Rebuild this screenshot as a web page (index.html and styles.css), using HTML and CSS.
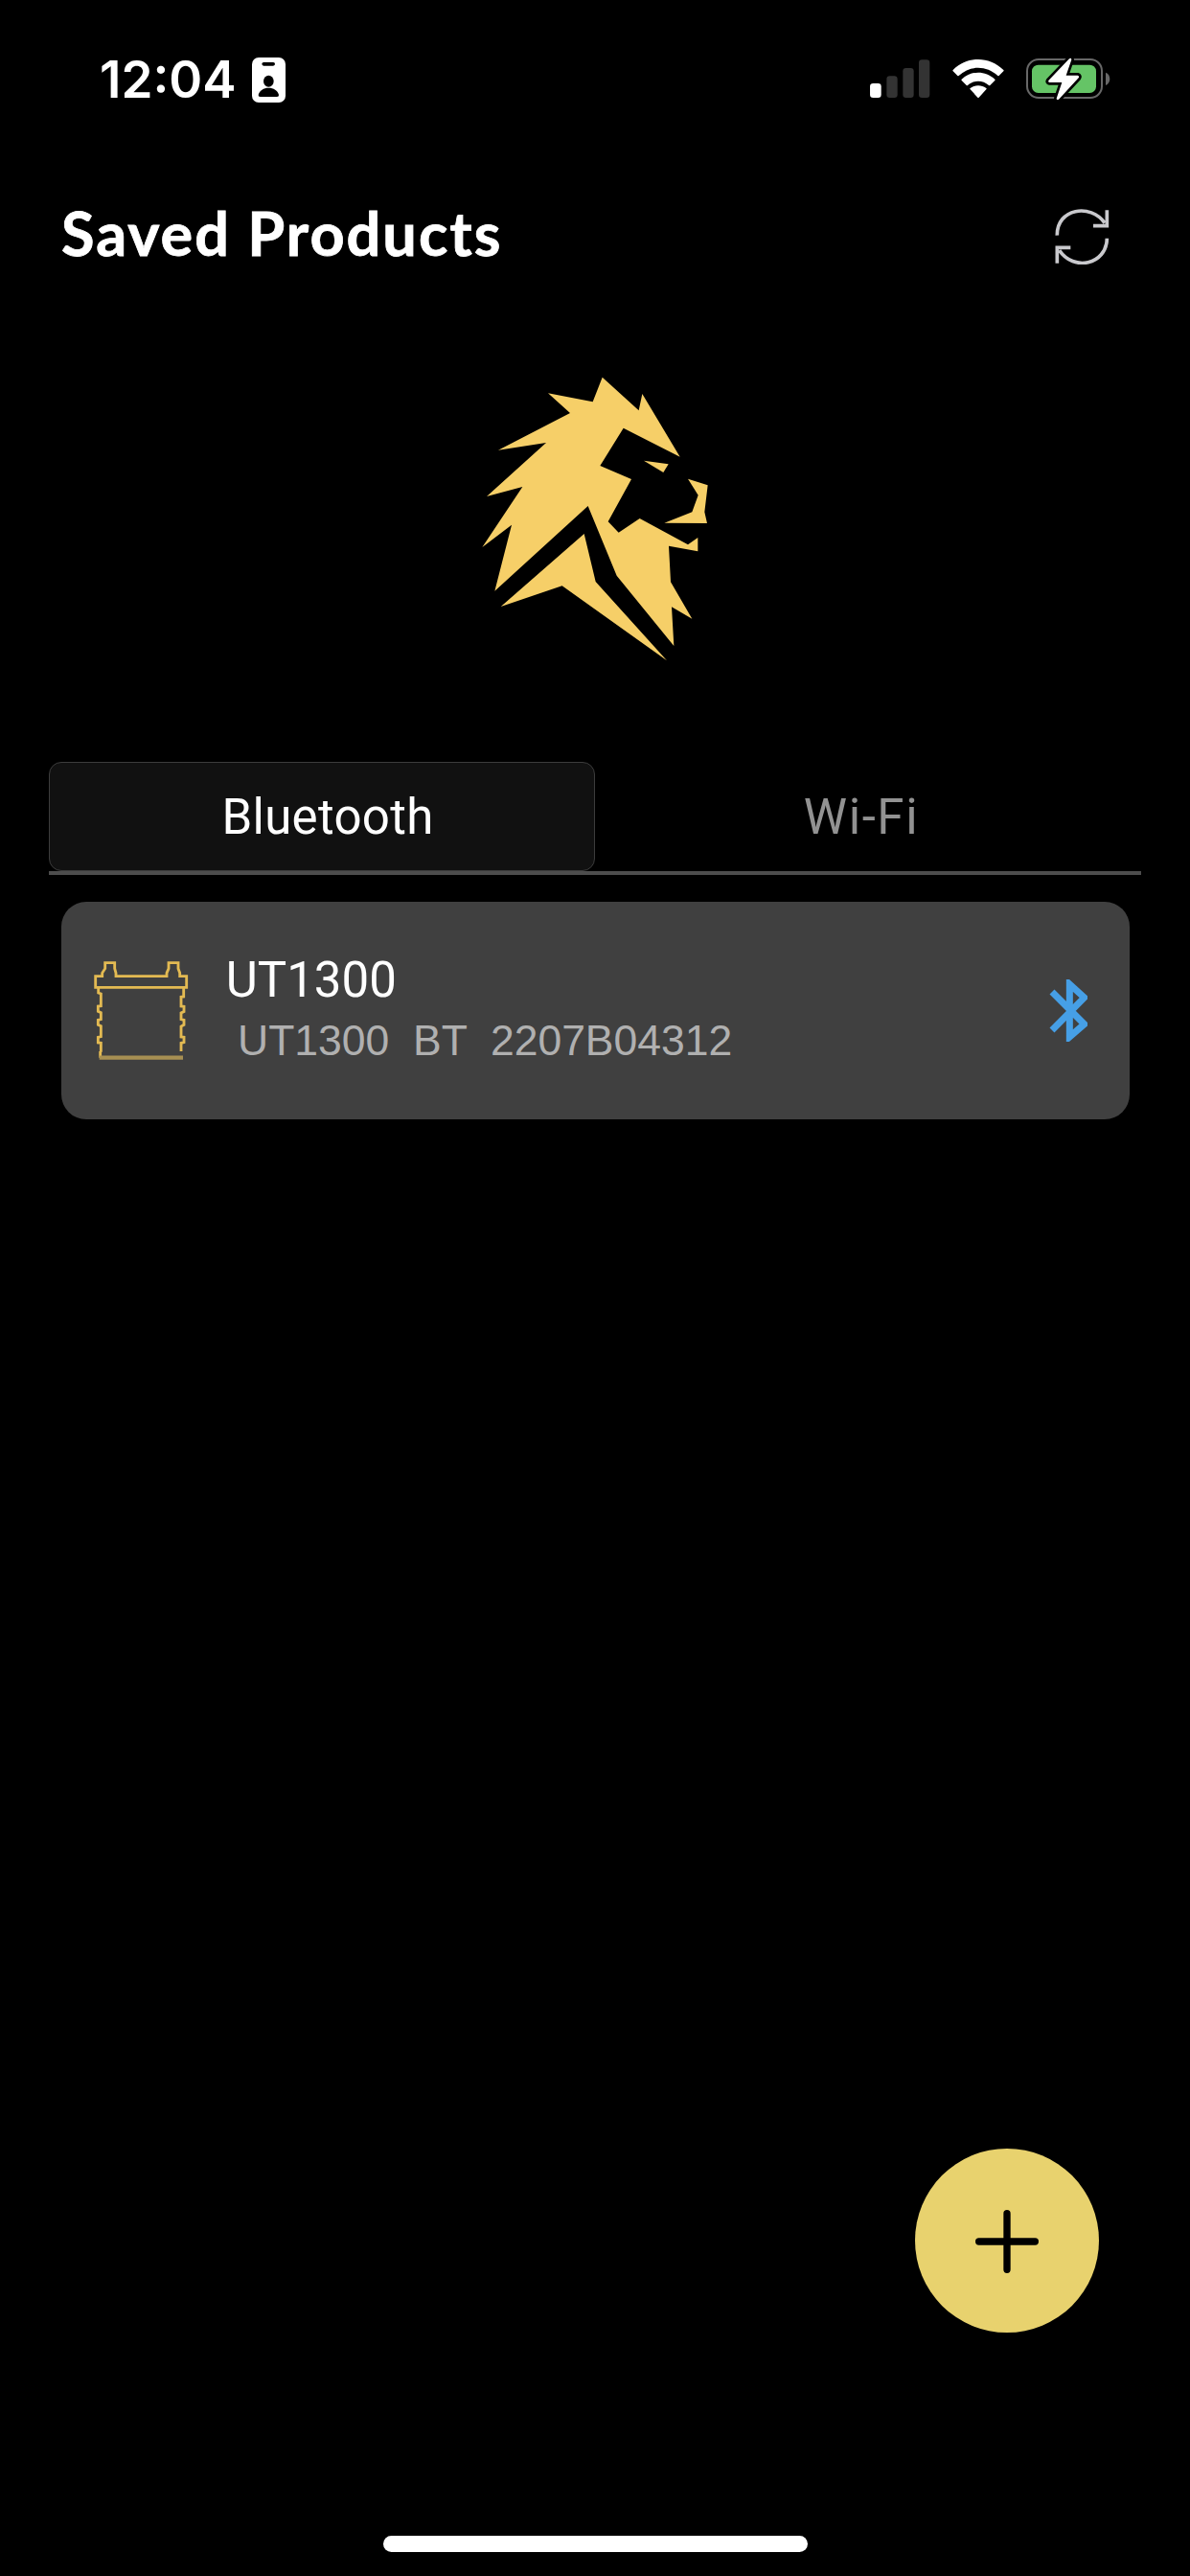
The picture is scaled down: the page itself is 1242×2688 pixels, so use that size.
FILE: index.html
```html
<!DOCTYPE html>
<html lang="en">
<head>
<meta charset="utf-8">
<title>Saved Products</title>
<link rel="stylesheet" href="styles.css">
</head>
<body>
<div class="screen">
  <header class="status">
    <div class="status-left">
      <span class="time">12:04</span>
      <svg class="id-icon" viewBox="549 60 105 141">
        <rect x="549" y="60" width="105" height="141" rx="21" fill="#fff"/>
        <rect x="580" y="75" width="41" height="11" rx="5.5"/>
        <ellipse cx="601" cy="134" rx="16" ry="18"/>
        <path d="M575 183q-7 0-6-6c3-14 17-22 32-22s29 8 32 22q1 6-6 6z"/>
      </svg>
    </div>
    <div class="status-right">
      <svg class="signal" viewBox="54 66 188 121">
        <rect x="54" y="141" width="35" height="45" rx="10" fill="#fff"/>
        <g fill="#333"><rect x="106" y="118" width="34" height="68" rx="10"/><rect x="157" y="93" width="34" height="93" rx="10"/><rect x="207" y="67" width="34" height="119" rx="10"/></g>
      </svg>
      <svg class="wifi" viewBox="311 66 162 121" fill="#fff">
        <path d="M313 99c45-44 113-44 158 0q2 2 0 4l-14 14q-2 2-4 0c-35-33-88-33-122 0q-2 2-4 0l-14-14q-2-2 0-4z"/>
        <path d="M340 128c30-28 74-28 104 0q2 2 0 4l-15 15q-2 2-4 0c-19-17-47-17-66 0q-2 2-4 0l-15-15q-2-2 0-4z"/>
        <path d="M367 156c15-11 35-11 50 0q2 2 0 4l-23 25q-2 2-4 0l-23-25q-2-2 0-4z"/>
      </svg>
      <svg class="battery" viewBox="543 60 264 135">
        <rect x="546" y="66" width="234" height="120" rx="36" fill="none" stroke="#686868" stroke-width="6"/>
        <path d="M792 107c17 5 17 35 0 40z" fill="#686868"/>
        <rect x="561" y="83" width="201" height="88" rx="20" fill="#65c466"/>
        <path d="M678 64L613 132q-3 5 3 6h39l-17 50q0 6 7 3l62-67q4-6-3-8h-36l17-49q-1-7-7-3z" fill="#fff" stroke="#000" stroke-width="16" stroke-linejoin="round" paint-order="stroke"/>
      </svg>
    </div>
  </header>

  <div class="title-row">
    <h1>Saved Products</h1>
    <svg class="refresh" viewBox="60 54 174 174" fill="none" stroke="#c9c9cd" stroke-width="11">
      <path d="M70 137C68 52 175 35 219 98M226 58v49h-43M226 146C225 230 120 250 77 184M70 224v-49h42"/>
    </svg>
  </div>

  <svg class="lion" viewBox="0 0 810 960" fill="#f6cf68">
    <path d="M416 41L530 145 541 93 659 290 482 200 409 318 507 360 434 493 467 527 533 483 684 565 715 543V586L624 569 630 682 697 797 633 760 640 882 461 662 371 444 79 710 132 503 40 573 166 384 54 414 240 246 90 269 315 153 246 91 386 118z"/>
    <path d="M359 531L395 681 618 928 290 694 98 759z"/>
    <path d="M546 302L623 313 607 339z"/>
    <path d="M684 359L746 379 736 463 744 498 610 497 697 463 716 410z"/>
  </svg>

  <nav class="tabs">
    <div class="tab active"><span>Bluetooth</span></div>
    <div class="tab"><span>Wi-Fi</span></div>
  </nav>

  <div class="card">
    <svg class="product" viewBox="143 219 296 312" fill="none" stroke="#e3ba52">
      <g stroke-width="8.5">
      <path d="M148 301v-35h21v-10l9-14v-18h30v18l4 14v10h159v-10l6-14v-18h30v18l5 14v10h21v35z"/>
      <path d="M157 303v15l8 3v38l-9 1v16l9 4v21l-9 2v15l9 4v33l-9 2v17l9 1v28M424 303v27l-8 1v29l9 1v16l-9 4v20l9 2v15l-9 5v33l9 1v16l-9 2v26M163 521v-20"/>
      </g>
      <path d="M160 521h262" stroke-width="13" stroke="#a78f52"/>
    </svg>
    <div class="info">
      <div class="name">UT1300</div>
      <div class="serial"> UT1300  BT  2207B04312</div>
    </div>
    <svg class="bt" viewBox="135 127 120 195" fill="none" stroke="#469fe6" stroke-width="21">
      <path d="M144 166L245 267 199 307V142L245 184 144 286"/>
    </svg>
  </div>

  <div class="fab">
    <svg viewBox="234 257 198 198" fill="none" stroke="#000" stroke-width="22" stroke-linecap="round"><path d="M333 268V444M245 356H421"/></svg>
  </div>
  <div class="home"></div>
</div>
</body>
</html>
```
FILE: styles.css
```css
* { box-sizing: border-box; }
body { margin: 0; background: #000; }
svg { display: block; flex: none; }
.screen {
  position: relative;
  width: 1242px;
  height: 2688px;
  background: #000;
  color: #fff;
  display: flex;
  flex-direction: column;
}
.status {
  height: 165px;
  padding: 0 83px 0 104px;
  display: flex;
  justify-content: space-between;
}
.status-left { display: flex; }
.time {
  width: 159px;
  padding-top: 51px;
  font: 600 53px/64px Inter, sans-serif;
  white-space: nowrap;
}
.id-icon { width: 35px; height: 47px; margin-top: 60px; }
.status-right { display: flex; }
.signal { width: 62.7px; height: 40.3px; margin-top: 62px; }
.wifi { width: 54px; height: 40.3px; margin: 62px 0 0 23px; }
.battery { width: 88px; height: 45px; margin: 60px 0 0 23.3px; }
.title-row {
  height: 195px;
  padding: 0 84px 0 64px;
  display: flex;
  justify-content: space-between;
}
h1 {
  margin: 38px 0 0;
  font: 700 63px/80px Lato, sans-serif;
  letter-spacing: 2px;
  -webkit-text-stroke: 0.8px #fff;
  white-space: nowrap;
}
.refresh { width: 58px; height: 58px; margin-top: 53px; }
.lion { width: 270px; height: 320px; margin: 20px 0 0 490px; }
.tabs {
  width: 1140px;
  height: 118px;
  margin: 95px 0 0 51px;
  border-bottom: 4px solid #4d4d4d;
  display: flex;
}
.tab {
  flex: 1 1 0;
  height: 114px;
  padding: 2px 14px 0 0;
  display: flex;
  align-items: center;
  justify-content: center;
  color: #929292;
  font: 400 51px/60px Roboto, sans-serif;
  letter-spacing: 1.6px;
}
.tab.active {
  padding: 2px 0 0 12px;
  color: #fff;
  background: #111;
  border: 1px solid #3c3c3c;
  border-radius: 13px;
  letter-spacing: 0.3px;
}
.card {
  width: 1115px;
  height: 227px;
  margin: 28px 0 0 64px;
  padding: 0 44px 0 34px;
  border-radius: 26px;
  background: #404040;
  display: flex;
}
.product { width: 98.7px; height: 104px; margin-top: 62px; }
.info { flex: 1; margin: 52px 0 0 39px; }
.name { font: 400 51px/60px Roboto, sans-serif; }
.serial {
  margin-top: 8px;
  color: #b0b0b0;
  font: 400 44.5px/50px "Liberation Sans", sans-serif;
  white-space: pre;
}
.bt { width: 40px; height: 65px; margin-top: 81px; }
.fab {
  position: absolute;
  left: 955px;
  top: 2242px;
  width: 192px;
  height: 192px;
  border-radius: 50%;
  background: #e8d26e;
}
.fab svg { width: 66px; height: 66px; margin: 64px 0 0 63px; }
.home {
  width: 443px;
  height: 17px;
  margin: auto auto 25px 400px;
  border-radius: 9px;
  background: #fff;
}
```
